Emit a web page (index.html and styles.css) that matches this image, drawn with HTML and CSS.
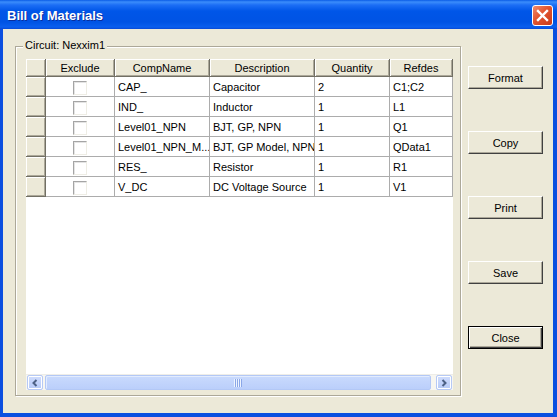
FILE: index.html
```html
<!DOCTYPE html>
<html lang="en">
<head>
  <meta charset="UTF-8" />
  <title>Bill of Materials</title>
  <link rel="stylesheet" href="styles.css">
</head>
<body>

  <div class="window">
    <!-- Title bar -->
    <div class="titlebar">
      <span class="title">Bill of Materials</span>
      <button class="close-x" aria-label="Close">
        <svg width="13" height="13" viewBox="0 0 13 13">
          <path d="M2 2 L11 11 M11 2 L2 11" stroke="#fff" stroke-width="2.4" stroke-linecap="square" fill="none"/>
        </svg>
      </button>
    </div>

    <div class="client">
      <div class="group">
        <span class="group-label">Circuit: Nexxim1</span>

        <div class="grid">
          <table>
            <colgroup>
              <col style="width:20px"><col style="width:69px"><col style="width:95px">
              <col style="width:105px"><col style="width:75px"><col style="width:63px">
            </colgroup>
            <thead>
              <tr>
                <th class="rowhead"></th>
                <th>Exclude</th>
                <th>CompName</th>
                <th>Description</th>
                <th>Quantity</th>
                <th>Refdes</th>
              </tr>
            </thead>
            <tbody>
              <tr>
                <td class="rowhead"></td>
                <td class="center"><span class="check"></span></td>
                <td>CAP_</td>
                <td>Capacitor</td>
                <td>2</td>
                <td>C1;C2</td>
              </tr>
              <tr>
                <td class="rowhead"></td>
                <td class="center"><span class="check"></span></td>
                <td>IND_</td>
                <td>Inductor</td>
                <td>1</td>
                <td>L1</td>
              </tr>
              <tr>
                <td class="rowhead"></td>
                <td class="center"><span class="check"></span></td>
                <td>Level01_NPN</td>
                <td>BJT, GP, NPN</td>
                <td>1</td>
                <td>Q1</td>
              </tr>
              <tr>
                <td class="rowhead"></td>
                <td class="center"><span class="check"></span></td>
                <td>Level01_NPN_M...</td>
                <td>BJT, GP Model, NPN</td>
                <td>1</td>
                <td>QData1</td>
              </tr>
              <tr>
                <td class="rowhead"></td>
                <td class="center"><span class="check"></span></td>
                <td>RES_</td>
                <td>Resistor</td>
                <td>1</td>
                <td>R1</td>
              </tr>
              <tr>
                <td class="rowhead"></td>
                <td class="center"><span class="check"></span></td>
                <td>V_DC</td>
                <td>DC Voltage Source</td>
                <td>1</td>
                <td>V1</td>
              </tr>
            </tbody>
          </table>

          <div class="grid-fill"></div>

          <!-- Horizontal scrollbar -->
          <div class="hscroll">
            <span class="sb-btn">
              <svg width="8" height="8" viewBox="0 0 8 8"><path d="M5.5 1 L2.5 4 L5.5 7" stroke="#4D6185" stroke-width="2" fill="none"/></svg>
            </span>
            <span class="sb-thumb"><span class="grip"></span></span>
            <span class="sb-btn">
              <svg width="8" height="8" viewBox="0 0 8 8"><path d="M2.5 1 L5.5 4 L2.5 7" stroke="#4D6185" stroke-width="2" fill="none"/></svg>
            </span>
          </div>
        </div>
      </div>

      <div class="buttons">
        <button class="btn">Format</button>
        <button class="btn">Copy</button>
        <button class="btn">Print</button>
        <button class="btn">Save</button>
        <button class="btn default">Close</button>
      </div>
    </div>
  </div>

</body>
</html>
```

FILE: styles.css
```css
/* Reset & base */
*, *::before, *::after {
  box-sizing: border-box;
}
body {
  margin: 0;
  font-family: 'Liberation Sans', Arial, sans-serif;
  font-size: 11px;
  color: #000;
  background: #ECE9D8;
}

/* Window frame */
.window {
  width: 557px;
  height: 417px;
  display: flex;
  flex-direction: column;
  background: #0B4FE0;
}

/* Title bar */
.titlebar {
  height: 29px;
  display: flex;
  align-items: center;
  justify-content: space-between;
  padding: 0 4px 0 7px;
  background: linear-gradient(#0A5CE6 0, #3B8DFB 2px, #1C6EF5 5px, #0056E8 11px, #0053E4 22px, #0A5FEE 27px, #0849D6 29px);
}
.title {
  color: #fff;
  font-weight: 700;
  font-size: 13px;
  padding-top: 2px;
  text-shadow: 1px 1px 0 #0A2E9C;
}
.close-x {
  width: 21px;
  height: 21px;
  margin-top: 2px;
  padding: 0;
  display: flex;
  align-items: center;
  justify-content: center;
  border: 1px solid #fff;
  border-radius: 3px;
  background: linear-gradient(135deg, #F08C6E, #E2542F 45%, #C8391A);
}

/* Client area */
.client {
  flex: 1;
  display: flex;
  align-items: flex-start;
  margin: 0 4px 4px 3px;
  padding: 17px 0 0 12px;
  background: #ECE9D8;
}

/* Group box */
.group {
  position: relative;
  width: 446px;
  height: 350px;
  padding: 12px 0 0 10px;
  border: 1px solid #ACA899;
  box-shadow: 1px 1px 0 #fff, inset 1px 1px 0 #fff;
}
.group-label {
  position: absolute;
  top: -8px;
  left: 7px;
  padding: 0 2px;
  background: #ECE9D8;
}

/* Data grid */
.grid {
  width: 427px;
  height: 331px;
  display: flex;
  flex-direction: column;
  background: #fff;
}
.grid table {
  width: 427px;
  table-layout: fixed;
  border-collapse: separate;
  border-spacing: 0;
}
.grid th,
.grid td {
  padding: 0 3px;
  white-space: nowrap;
  overflow: hidden;
  font-weight: 400;
  text-align: left;
}
.grid th {
  height: 18px;
  text-align: center;
  background: #ECE9D8;
  border-right: 1px solid #716F64;
  border-bottom: 1px solid #716F64;
  box-shadow: inset 1px 1px 0 #fff, inset -1px -1px 0 #ACA899;
}
.grid td {
  height: 20px;
  border-right: 1px solid #ACACAC;
  border-bottom: 1px solid #ACACAC;
}
.grid td.rowhead {
  background: #ECE9D8;
  border-right: 1px solid #716F64;
  border-bottom: 1px solid #716F64;
  box-shadow: inset 1px 1px 0 #fff, inset -1px -1px 0 #ACA899;
}
.grid td.center {
  text-align: center;
}
.check {
  display: inline-block;
  width: 14px;
  height: 14px;
  margin-top: 2px;
  vertical-align: middle;
  background: #fff;
  border: 1px solid;
  border-color: #A5A5A5 #EEEDE5 #EEEDE5 #A5A5A5;
  box-shadow: inset 1px 1px 0 #E4E4E4;
}
.grid-fill {
  flex: 1;
}

/* Horizontal scrollbar */
.hscroll {
  height: 16px;
  display: flex;
  padding: 0 1px;
  background: #F7F6F1;
  border-top: 1px solid #EEEDE8;
}
.sb-btn {
  width: 16px;
  height: 15px;
  display: flex;
  align-items: center;
  justify-content: center;
  border: 1px solid #B6C9F5;
  border-radius: 2px;
  background: linear-gradient(#CFDCFD, #B7CBF7);
  box-shadow: 0 0 0 1px #fff inset;
}
.sb-thumb {
  flex: 1;
  margin: 0 5px 0 2px;
  display: flex;
  align-items: center;
  justify-content: center;
  border: 1px solid #B3C8F6;
  border-radius: 2px;
  background: linear-gradient(#C9DAFD, #BBCFFB);
  box-shadow: inset 1px 1px 0 #E3ECFE;
}
.grip {
  width: 8px;
  height: 8px;
  background: repeating-linear-gradient(90deg, #EEF4FE 0 1px, #8AA7E8 1px 2px);
}

/* Side buttons */
.buttons {
  display: flex;
  flex-direction: column;
  gap: 42px;
  margin-left: 7px;
  padding-top: 20px;
}
.btn {
  width: 75px;
  height: 23px;
  padding: 0;
  font-family: 'Liberation Sans', Arial, sans-serif;
  font-size: 11px;
  color: #000;
  background: #ECE9D8;
  border: 1px solid;
  border-color: #fff #404040 #404040 #fff;
  box-shadow: inset -1px -1px 0 #ACA899;
}
.btn.default {
  border: 1px solid #000;
  box-shadow: inset 1px 1px 0 #fff, inset -1px -1px 0 #404040, inset -2px -2px 0 #ACA899;
}
```
